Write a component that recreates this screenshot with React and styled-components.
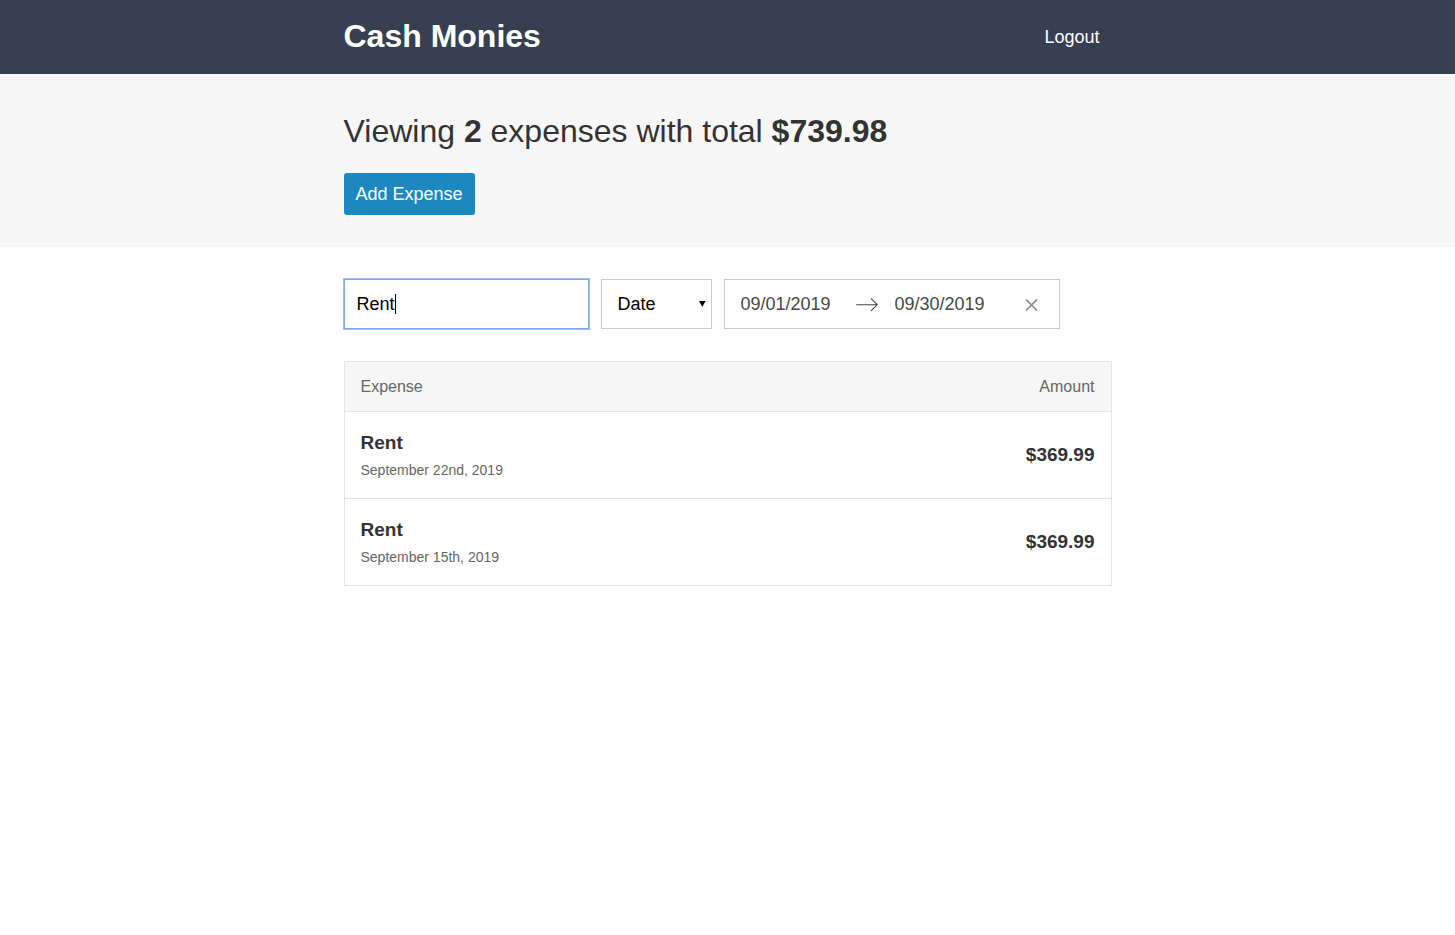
import React, { useState } from "react";
import styled, { createGlobalStyle } from "styled-components";

const GlobalStyle = createGlobalStyle`
  *, *::before, *::after { box-sizing: border-box; }
  body {
    margin: 0;
    background: #fff;
    color: #333;
    font-family: "Liberation Sans", Arial, Helvetica, sans-serif;
    font-size: 16px;
    line-height: 24px;
  }
  button, input, select { font-family: inherit; }
`;

const Container = styled.div`
  max-width: 800px;
  margin: 0 auto;
  padding: 0 16px;
`;

const Header = styled.header`
  background: #364051;
`;

const HeaderContent = styled(Container)`
  display: flex;
  align-items: flex-start;
  justify-content: space-between;
  padding-top: 16px;
  padding-bottom: 16px;
`;

const Brand = styled.a`
  color: #fff;
  text-decoration: none;
`;

const BrandTitle = styled.h1`
  margin: 0;
  font-size: 32px;
  line-height: 40px;
`;

const Button = styled.button`
  border: none;
  border-radius: ${({ $link }) => ($link ? "0" : "3px")};
  background: ${({ $link }) => ($link ? "none" : "#1c88bf")};
  color: #fff;
  font-size: 18px;
  line-height: 18px;
  padding: 12px;
  cursor: pointer;
`;

const Summary = styled.section`
  background: #f7f7f7;
  padding: 32px 0;
`;

const SummaryTitle = styled.h2`
  margin: 0 0 16px;
  font-size: 32px;
  font-weight: 300;
  line-height: 51px;
  strong { font-weight: 700; }
`;

const Filters = styled.form`
  display: flex;
  flex-wrap: wrap;
  gap: 12px;
  margin: 32px 0;
`;

const fieldHeight = "50px";

const SearchWrap = styled.div`
  position: relative;
`;

const TextInput = styled.input`
  display: block;
  width: 245px;
  height: ${fieldHeight};
  padding: 12px;
  border: 1px solid #cacccd;
  border-radius: 0;
  font-size: 18px;
  color: #000;
  caret-color: ${({ $edited }) => ($edited ? "#000" : "transparent")};
  &:focus {
    border-color: #83a9ed;
    outline: 1px solid #a3c0f3;
    outline-offset: 0;
  }
`;

const Caret = styled.span`
  position: absolute;
  left: 51px;
  top: 15px;
  width: 1px;
  height: 20px;
  background: #000;
  pointer-events: none;
`;

const SelectWrap = styled.div`
  position: relative;
  svg {
    position: absolute;
    right: 6px;
    top: 22px;
    pointer-events: none;
  }
`;

const Select = styled.select`
  appearance: none;
  width: 111px;
  height: ${fieldHeight};
  padding: 12px 16px;
  border: 1px solid #cacccd;
  border-radius: 0;
  background: #fff;
  font-size: 18px;
  color: #000;
`;

const DateRange = styled.div`
  display: flex;
  align-items: center;
  width: 336px;
  height: ${fieldHeight};
  border: 1px solid #cacccd;
  background: #fff;
`;

const DateInput = styled.input`
  width: 130px;
  padding: 12px 16px;
  border: none;
  background: none;
  font-size: 18px;
  line-height: 24px;
  color: #484848;
`;

const ClearButton = styled.button`
  display: flex;
  margin-left: 7px;
  padding: 8px;
  border: none;
  background: none;
  cursor: pointer;
`;

const Table = styled.table`
  width: 100%;
  border: 1px solid #e5e5e5;
  border-spacing: 0;
`;

const HeadCell = styled.th`
  padding: 12px 16px;
  background: #f7f7f7;
  color: #666;
  font-weight: 400;
  line-height: 25px;
  text-align: ${({ $end }) => ($end ? "right" : "left")};
`;

const Cell = styled.td`
  padding: 16px;
  border-top: 1px solid #e5e5e5;
  text-align: ${({ $end }) => ($end ? "right" : "left")};
`;

const ItemTitle = styled.h3`
  margin: 0;
  font-size: 19px;
  line-height: 30px;
`;

const ItemDate = styled.span`
  display: block;
  color: #666;
  font-size: 14px;
  line-height: 24px;
`;

const Amount = styled.strong`
  font-size: 19px;
`;

const expenses = [
  { id: 1, title: "Rent", date: "September 22nd, 2019", amount: "$369.99" },
  { id: 2, title: "Rent", date: "September 15th, 2019", amount: "$369.99" },
];

export default function App() {
  const [text, setText] = useState("Rent");
  const [edited, setEdited] = useState(false);
  const [start, setStart] = useState("09/01/2019");
  const [end, setEnd] = useState("09/30/2019");

  return (
    <>
      <GlobalStyle />
      <Header>
        <HeaderContent>
          <Brand href="#dashboard">
            <BrandTitle>Cash Monies</BrandTitle>
          </Brand>
          <Button type="button" $link>Logout</Button>
        </HeaderContent>
      </Header>
      <main>
        <Summary>
          <Container>
            <SummaryTitle>
              Viewing <strong>2</strong> expenses with total <strong>$739.98</strong>
            </SummaryTitle>
            <Button type="button">Add Expense</Button>
          </Container>
        </Summary>
        <Container>
          <Filters onSubmit={(e) => e.preventDefault()}>
            <SearchWrap>
              <TextInput
                type="text"
                aria-label="Search expenses"
                autoFocus
                $edited={edited}
                value={text}
                onKeyDown={() => setEdited(true)}
                onMouseDown={() => setEdited(true)}
                onBlur={() => setEdited(true)}
                onChange={(e) => setText(e.target.value)}
              />
              {!edited && <Caret aria-hidden="true" />}
            </SearchWrap>
            <SelectWrap>
              <Select aria-label="Sort by" defaultValue="date">
                <option value="date">Date</option>
                <option value="amount">Amount</option>
              </Select>
              <svg width="7" height="6" viewBox="0 0 7 6" aria-hidden="true">
                <path d="M0 0h6.6L3.3 6z" fill="#000" />
              </svg>
            </SelectWrap>
            <DateRange>
              <DateInput
                type="text"
                aria-label="Start Date"
                value={start}
                onChange={(e) => setStart(e.target.value)}
              />
              <svg width="24" height="24" viewBox="0 -21 1000 1000" aria-hidden="true">
                <path
                  fill="#484848"
                  d="M694 242l249 250c12 11 12 21 1 32L694 773c-5 5-10 7-16 7s-11-2-16-7c-11-11-11-21 0-32l210-210H68c-13 0-23-10-23-23s10-23 23-23h806L662 275c-21-22 11-54 32-33z"
                />
              </svg>
              <DateInput
                type="text"
                aria-label="End Date"
                value={end}
                onChange={(e) => setEnd(e.target.value)}
              />
              <ClearButton
                type="button"
                aria-label="Clear Dates"
                onClick={() => {
                  setStart("");
                  setEnd("");
                }}
              >
                <svg width="15" height="15" viewBox="0 0 15 15" aria-hidden="true">
                  <path d="M2.5 3l10 10M12.5 3L2.5 13" stroke="#82888a" strokeWidth="1.7" strokeLinecap="round" />
                </svg>
              </ClearButton>
            </DateRange>
          </Filters>
          <Table>
            <thead>
              <tr>
                <HeadCell scope="col">Expense</HeadCell>
                <HeadCell scope="col" $end>Amount</HeadCell>
              </tr>
            </thead>
            <tbody>
              {expenses.map((item) => (
                <tr key={item.id}>
                  <Cell>
                    <ItemTitle>{item.title}</ItemTitle>
                    <ItemDate>{item.date}</ItemDate>
                  </Cell>
                  <Cell $end>
                    <Amount>{item.amount}</Amount>
                  </Cell>
                </tr>
              ))}
            </tbody>
          </Table>
        </Container>
      </main>
    </>
  );
}
